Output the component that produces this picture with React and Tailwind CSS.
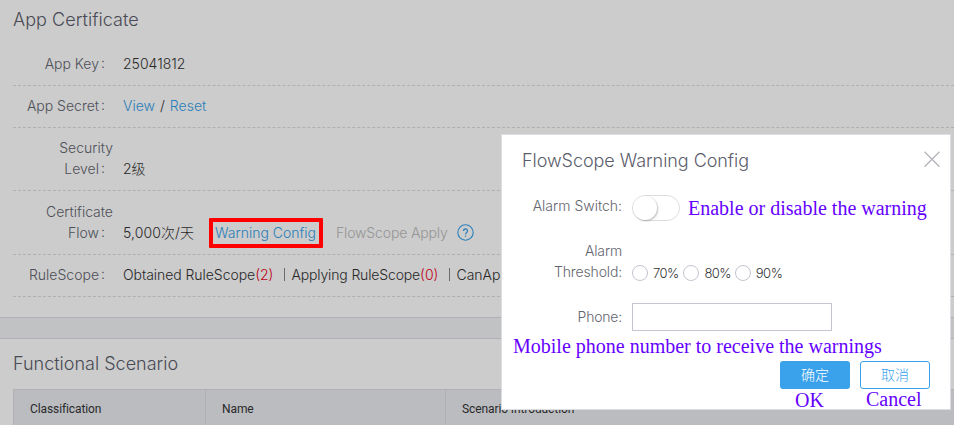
function Row({ label, height, children }) {
  return (
    <div className={`flex shrink-0 items-end border-b border-dashed border-[#dcdcdc] pb-[11px] ${height}`}>
      <div className="w-[100px] shrink-0 text-right text-[#63656f]">{label}</div>
      <div className="ml-[10px] flex items-center whitespace-nowrap text-[#333]">{children}</div>
    </div>
  );
}

function Colon() {
  return <span className="inline-block w-[14px] pl-[2px] text-left leading-[19px] align-[1px]">:</span>;
}

function Threshold({ value }) {
  return (
    <label className="flex items-center">
      <input
        type="radio"
        name="threshold"
        className="h-4 w-4 appearance-none rounded-full border border-[#c4c6cf] bg-white"
      />
      <span className="ml-[5px] w-[30.4px] text-[13px] leading-4 tracking-[-0.5px] text-[#333]">{value}</span>
    </label>
  );
}

function WarningDialog() {
  return (
    <div className="absolute left-[501px] top-[134px] h-[276px] w-[450px] border border-[#dcdde3] bg-white">
      <div className="flex h-[50px] items-center justify-between pl-5 pr-2">
        <h3 className="text-[18px] tracking-[-0.05px] text-[#5b5d6b]">FlowScope Warning Config</h3>
        <button className="-mt-[2px]">
          <svg viewBox="0 0 20 20" className="h-5 w-5 text-[#b4b5bb]" stroke="currentColor" strokeWidth="1.3">
            <path d="M2.5 2.8l15 15M17.5 2.8l-15 15" />
          </svg>
        </button>
      </div>

      <div className="flex h-12 items-start pt-[10px]">
        <span className="w-[120px] text-right leading-[22px] text-[#63656f]">Alarm Switch:</span>
        <button className="ml-[10px] h-[26px] w-12 rounded-full border border-[#dcdde3] bg-white">
          <span className="block h-6 w-6 rounded-full bg-white shadow-[1px_1px_2px_rgba(0,0,0,0.25)]" />
        </button>
      </div>

      <div className="mt-[7px] flex items-end">
        <span className="w-[120px] pl-[50px] text-right tracking-[-0.15px] text-[#63656f]">Alarm Threshold:</span>
        <div className="ml-[10px] mb-px flex">
          <Threshold value="70%" />
          <Threshold value="80%" />
          <Threshold value="90%" />
        </div>
      </div>

      <div className="mt-[21px] flex items-center">
        <span className="w-[120px] pb-[2px] text-right tracking-[-0.2px] text-[#63656f]">Phone:</span>
        <input type="text" className="ml-[10px] h-7 w-[200px] border border-[#c4c6cf] bg-white" />
      </div>

      <div className="mt-[30px] flex justify-end gap-[10px] pr-5 text-[14px] font-light">
        <button className="h-7 w-[70px] rounded-[3px] bg-[#3aa2eb] pb-px text-white">确定</button>
        <button className="h-7 w-[70px] rounded-[3px] border border-[#3aa2eb] bg-white pb-px text-[#3aa2eb]">
          取消
        </button>
      </div>
    </div>
  );
}

// purple notes written over the dialog
function Note({ place, children }) {
  return (
    <span
      className={`absolute whitespace-nowrap font-['Liberation_Serif',serif] text-[20px] leading-6 font-normal text-[#6600ff] ${place}`}
    >
      {children}
    </span>
  );
}

export default function App() {
  return (
    <div className="relative h-[425px] w-[954px] overflow-hidden bg-white font-['Inter','Noto_Sans_CJK_SC',sans-serif] text-[14px] leading-[21px] font-[350]">
      <section className="flex h-[318px] flex-col border-b border-[#dcdde3] pl-[13px]">
        <h2 className="h-[44px] shrink-0 pt-[8px] text-[18px] leading-[23px] tracking-[0.05px] text-[#5b5d6b]">
          App Certificate
        </h2>
        <Row height="h-[42px]" label={<>App Key<Colon /></>}>
          25041812
        </Row>
        <Row height="h-[42px]" label={<>App Secret<Colon /></>}>
          <a className="text-[#35a0ea]">View</a>
          <span className="mx-[5px]">/</span>
          <a className="text-[#35a0ea]">Reset</a>
        </Row>
        <Row height="h-[63px]" label={<>Security<br />Level<Colon /></>}>
          <span className="font-light">2级</span>
        </Row>
        <Row height="h-[64px]" label={<>Certificate<br />Flow<Colon /></>}>
          <span className="w-[92px] font-light tracking-[0.1px]">5,000次/天</span>
          <a className="w-[121px] text-[#35a0ea]">Warning Config</a>
          <span className="w-[121px] tracking-[-0.15px] text-[#bcbcbc]">FlowScope Apply</span>
          <svg viewBox="0 0 17 17" className="h-[17px] w-[17px] text-[#35a0ea]" fill="none" stroke="currentColor">
            <circle cx="8.5" cy="8.5" r="7.7" strokeWidth="1.1" />
            <path d="M6.5 7a2 2 0 1 1 3 1.7c-.7.4-1 .7-1 1.5M8.5 11.4v1.3" strokeWidth="1.3" />
          </svg>
        </Row>
        <Row height="h-[42px]" label={<>RuleScope<Colon /></>}>
          <span className="tracking-[-0.05px]">Obtained RuleScope</span>
          <span className="text-[#f00020]">(2)</span>
          <span className="ml-[11px] mr-[6px] h-[13px] w-px bg-[#888]" />
          <span className="tracking-[-0.15px]">Applying RuleScope</span>
          <span className="text-[#f00020]">(0)</span>
          <span className="ml-[11px] mr-[6px] h-[13px] w-px bg-[#888]" />
          <span>CanApply RuleScope</span>
        </Row>
      </section>

      <div className="h-5 bg-[#f1f3f4]" />

      <section className="h-[87px] border-t border-[#dcdde3] pl-[13px]">
        <h2 className="h-[50px] pt-[13px] text-[18px] leading-[23px] text-[#5b5d6b]">
          Functional Scenario
        </h2>
        <div className="flex h-[36px] border-l border-t border-[#dcdde3] bg-[#eaebf1] font-['Roboto',sans-serif] text-[12px] leading-[38px] font-normal tracking-[-0.1px] text-[#333]">
          <div className="w-[192px] border-r border-[#dcdde3] pl-4">Classification</div>
          <div className="w-[240px] border-r border-[#dcdde3] pl-4">Name</div>
          <div className="flex-1 pl-4">Scenario Introduction</div>
        </div>
      </section>

      <div className="absolute inset-0 bg-black/20" />
      <div className="absolute left-[209px] top-[218px] h-[30px] w-[114px] rounded-[1px] border-4 border-[#ff0000]" />

      <WarningDialog />
      <Note place="left-[688px] top-[196px]">Enable or disable the warning</Note>
      <Note place="left-[513px] top-[334px]">Mobile phone number to receive the warnings</Note>
      <Note place="left-[795px] top-[388px]">OK</Note>
      <Note place="left-[866px] top-[387px]">Cancel</Note>
    </div>
  );
}
